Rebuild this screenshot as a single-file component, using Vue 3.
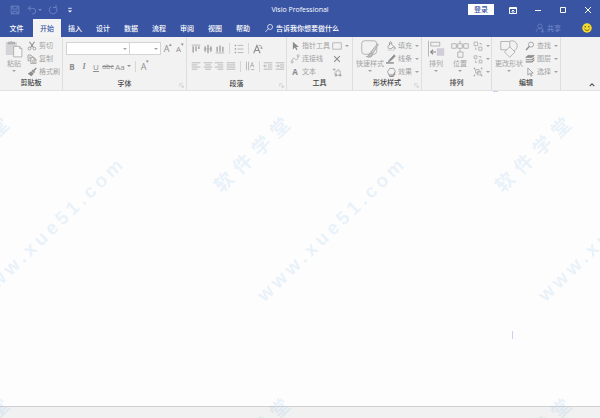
<script setup>
import { ref } from 'vue'

const icons = {
  save: '<path d="M2.5 2.5h9v9h-9zM4.5 2.5v3.5h5v-3.5M4.5 11.5v-3h5v3"/>',
  undo: '<path d="M5.5 2L2.5 5l3 3M2.5 5h5.5a3 3 0 0 1 0 6.500h-1"/>',
  redo: '<path d="M10 3.500a4.500 4.500 0 1 1-5-.5M10.500 1v3h-3.500"/>',
  customize: '<path d="M5 5h4"/><path d="M4.500 7.500h5l-2.500 2.500z" fill="currentColor" stroke="none"/>',
  search: '<circle cx="8.500" cy="5.500" r="3.500"/><path d="M6 8l-4 4.500"/>',
  person: '<circle cx="7" cy="4.500" r="3"/><path d="M1.500 13c0-3.500 2.500-5.500 5.500-5.500s4 1 5 2.500M8 11.500h5M10.500 9v5"/>',
  ribbonMode: '<path d="M3.500 4.500h7v6h-7zM3.500 5.500h7M7 10V7M5.500 8.500L7 7l1.500 1.500"/>',
  min: '<path d="M4 7.500h6"/>',
  max: '<path d="M4.500 4.500h5v5h-5z"/>',
  close: '<path d="M4 4l6 6M10 4l-6 6"/>',
  scissors: '<path d="M3.500 1l5.500 8M10.500 1L5 9" stroke-width="1.500"/><circle cx="3.500" cy="10.500" r="2"/><circle cx="10.500" cy="10.500" r="2"/>',
  copy: '<path d="M5 9.500H1.500v-8h4l2 2V5M5.500 4.500h4l3 3v6h-7zM9.500 4.500v3h3M7 9.500h4M7 11.500h4M3 4.500h2M3 6.500h2"/>',
  brush: '<path d="M13 1.500L9.500 5" stroke-width="2"/><path d="M8 3.500l3.500 3.500-2 1.500-3-3zM6 6l3.500 3.500L6 13 1 9.500z" fill="currentColor" stroke="none"/>',
  pointer: '<path d="M4 1v11l3-3 2 4 1.500-1-2-3.500h4z" fill="currentColor" stroke="none"/>',
  connector: '<path d="M3 9.500C3 5 6 5 7 7s4 2 4-3"/><circle cx="3" cy="11" r="1.500"/><circle cx="11.500" cy="2.500" r="1.500"/>',
  rect: '<path d="M1 2.500h12v9H1z"/>',
  cross: '<path d="M3 3l8 8M11 3l-8 8" stroke-width="1.500"/>',
  cpoint: '<path d="M5.500 5.500h6v6h-6zM1 3.500h4M3 1.500v4M8 3.500h2M3.500 8v2"/><path d="M10 10h3v3h-3zM4 10h3v3H4z" fill="currentColor" stroke="none"/>',
  fill: '<path d="M6 3l5 4.500-4 3.500H4L2.500 8zM5 6V2q1.500-2 3 0v2M12 8q2 3 0 3.500-1.500-.5 0-3.500"/><path d="M2 12h10v2H2z" fill="#ddd" stroke="none"/>',
  line: '<path d="M11.500 1L5 8l-2 3 3.500-1.500L13 3z" fill="currentColor"/><path d="M0 12.500h11" stroke-width="2"/>',
  effect: '<path d="M5 2h6l2 4-3 5H5L2 7z"/><path d="M2 8l3 4h5l3-5v3l-3 4H5z" fill="currentColor" stroke="none"/>',
  group: '<path d="M1.500 1.500h5v5h-5zM8 8.500h4.500v4.500H8zM9 3.500h2.500v2M3.500 9v2.500H5"/>',
  order: '<path d="M1.500 2.500h4v4h-4zM8.500 8.500h4v4h-4zM8 3.500h3v2M3.500 9v3h2"/>',
  bundle: '<path d="M3.500 3.500h5v5h-5zM6 6h5v5H6z"/><path d="M1 1h2v2H1zM11 1h2v2h-2zM1 11h2v2H1zM11 11h2v2h-2z" fill="currentColor" stroke="none"/>',
  find: '<circle cx="8.500" cy="5" r="3.500"/><path d="M6 7.500l-4.500 5" stroke-width="2"/>',
  layers: '<path d="M1 8h9l3-3M1 11h9l3-3" stroke-width="1.500"/><path d="M4 2h9l-3 3H1z" fill="currentColor"/>',
  cursor: '<path d="M4 1.500v10l2.500-2.500 2 4 1.500-1-2-3.500h3.500z"/>',
  top: '<path d="M1 1.500h12"/><path d="M3 3v9M7 3v7M11 3v4" stroke-width="2"/>',
  middle: '<path d="M1 7h12" /><path d="M3 3v8M7 1v12M11 3v8" stroke-width="2"/>',
  bottom: '<path d="M1 12.500h12"/><path d="M3 4v7M7 2v9M11 4v7" stroke-width="2"/>',
  bullets: '<path d="M1 2h2M1 7h2M1 12h2" stroke-width="2"/><path d="M5 2h8M5 7h8M5 12h8"/>',
  rotate: '<path d="M1 13L5.500 2 10 13M3 9h5" stroke-width="1.500"/><path d="M8 2q4-1 4 4M10 5l2 2 2-2"/>',
  left: '<path d="M1 2.500h12M1 5.500h8M1 8.500h12M1 11.500h8"/>',
  center: '<path d="M1 2.500h12M3 5.500h8M1 8.500h12M3 11.500h8"/>',
  right: '<path d="M1 2.500h12M5 5.500h8M1 8.500h12M5 11.500h8"/>',
  justify: '<path d="M1 2.500h12M1 5.500h12M1 8.500h12M1 11.500h12"/>',
  vertical: '<path d="M2 1v12M5 1v12M7.500 9L10 2l2.500 7M8.500 6.500h3M8 12h5"/>',
  outdent: '<path d="M1 2.500h12M7 5.500h6M7 8.500h6M1 11.500h12M6 7H1M3 5L1 7l2 2"/>',
  indent: '<path d="M1 2.500h12M7 5.500h6M7 8.500h6M1 11.500h12M1 7h5M4 5l2 2-2 2"/>',
  launcher: '<path d="M2 10V2h8M6 6l6 6M12 7v5H7"/>',
  paste: '<path d="M1 3h15v17H1z" fill="#d6d3d8" stroke="none"/><path d="M4 5V3h3q1.500-3 3 0h3v2z" fill="#bbb"/><path d="M11.500 8.500h8l3 3v11h-11zM19.500 8.500v3h3" fill="#f7f7f7"/>',
  quick: '<rect x="1" y="1" width="20" height="18" rx="4"/><path d="M22 5L13 16l3 2 7-12z" fill="#ccc"/><path d="M13 17q-3 0-3 4-1 1-3 1 7 3 9-3z" fill="#bbb"/>',
  arrange: '<path d="M2 1v21"/><path d="M5 3h12v5H5z"/><path d="M13 11h10v10H13z" fill="#d0ccd8" stroke="none"/><path d="M12 16H5M8 13l-3 3 3 3" stroke="#888" stroke-width="1.500"/>',
  position: '<path d="M1 5h6v6H1zM17 5h6v6h-6zM9 16h7v7H9zM9 5h6v6H9zM7 8h2M15 8h2M12 11v5M12 1v4"/>',
  shapes: '<circle cx="16" cy="8" r="7"/><path d="M1 2h12v11H1z" fill="#f2f2f2"/><path d="M13 9l7 7-7 7-7-7z" fill="#f2f2f2"/>',
  collapse: '<path d="M3 9l4-4 4 4" stroke-width="2"/>',
}

const tabs = ['文件', '开始', '插入', '设计', '数据', '流程', '审阅', '视图', '帮助']
const active = ref('开始')

const clipboard = [['scissors', '剪切'], ['copy', '复制'], ['brush', '格式刷']]
const styling = [['fill', '填充'], ['line', '线条'], ['effect', '效果']]
const editing = [['find', '查找'], ['layers', '图层'], ['cursor', '选择']]
const arranging = [['group', '组合'], ['order', '次序'], ['bundle', '成组']]

const marks = [-26, 255, 536].flatMap((x) => [
  { text: '软件学堂', x, y: 153, kind: 'name' },
  { text: 'www.xue51.com', x: x + 77, y: 229, kind: 'url' },
  { text: '软件学堂', x, y: 434, kind: 'name' },
])
</script>

<template>
  <div class="window">
    <header class="titlebar">
      <div class="quick-access">
        <button class="ico" aria-label="保存"><svg viewBox="0 0 14 14" v-html="icons.save" /></button>
        <button class="ico" aria-label="撤消"><svg viewBox="0 0 14 14" v-html="icons.undo" /><i class="caret" /></button>
        <button class="ico" aria-label="恢复"><svg viewBox="0 0 14 14" v-html="icons.redo" /></button>
        <button class="ico bright" aria-label="自定义"><svg viewBox="0 0 14 14" v-html="icons.customize" /></button>
      </div>
      <h1>Visio Professional</h1>
      <div class="controls">
        <button class="login">登录</button>
        <button v-for="n in ['ribbonMode', 'min', 'max', 'close']" :key="n" class="win" :aria-label="n">
          <svg viewBox="0 0 14 14" v-html="icons[n]" />
        </button>
      </div>
    </header>

    <nav class="tabs">
      <button v-for="t in tabs" :key="t" :class="{ active: t === active }" @click="active = t">{{ t }}</button>
      <button class="tell"><svg viewBox="0 0 14 14" v-html="icons.search" />告诉我你想要做什么</button>
      <button class="share"><svg viewBox="0 0 14 14" v-html="icons.person" />共享</button>
      <button class="smile" aria-label="反馈">
        <svg viewBox="0 0 20 20">
          <circle cx="10" cy="10" r="9.500" fill="#f6dc2c" />
          <circle cx="6.500" cy="7.500" r="1.500" fill="#4c4a35" />
          <circle cx="13.500" cy="7.500" r="1.500" fill="#4c4a35" />
          <path d="M4.500 11.500q5.500 7 11 0" fill="none" stroke="#4c4a35" stroke-width="1.500" />
        </svg>
      </button>
    </nav>

    <div class="ribbon">
      <section class="group">
        <div class="body">
          <button class="large"><svg viewBox="0 0 24 24" v-html="icons.paste" />粘贴<i class="caret" /></button>
          <div class="stack">
            <button v-for="[i, t] in clipboard" :key="t" class="small darkicon"><svg viewBox="0 0 14 14" v-html="icons[i]" />{{ t }}</button>
          </div>
        </div>
        <h2>剪贴板</h2>
      </section>

      <section class="group">
        <div class="body rows">
          <div class="row">
            <div class="combo wide"><select aria-label="字体"><option></option></select><i class="caret" /></div>
            <div class="combo"><select aria-label="字号"><option></option></select><i class="caret" /></div>
            <button class="cell letter big grow">A<sup>▴</sup></button>
            <button class="cell letter">A<sup>▾</sup></button>
          </div>
          <div class="row">
            <button class="cell letter bold">B</button>
            <button class="cell letter italic">I</button>
            <button class="cell letter under">U</button>
            <button class="cell letter strike">abc</button>
            <button class="cell letter case">Aa<i class="caret" /></button>
            <span class="sep" />
            <button class="cell letter big">A<sup>▾</sup></button>
          </div>
        </div>
        <h2>字体</h2>
        <button class="launcher" aria-label="字体设置"><svg viewBox="0 0 14 14" v-html="icons.launcher" /></button>
      </section>

      <section class="group">
        <div class="body rows">
          <div class="row">
            <button v-for="n in ['top', 'middle', 'bottom']" :key="n" class="cell" :aria-label="n"><svg viewBox="0 0 14 14" v-html="icons[n]" /></button>
            <span class="sep" />
            <button class="cell" aria-label="项目符号"><svg viewBox="0 0 14 14" v-html="icons.bullets" /></button>
            <span class="sep" />
            <button class="cell dark" aria-label="旋转文本"><svg viewBox="0 0 14 14" v-html="icons.rotate" /></button>
          </div>
          <div class="row">
            <button v-for="n in ['left', 'center', 'right', 'justify']" :key="n" class="cell" :aria-label="n"><svg viewBox="0 0 14 14" v-html="icons[n]" /></button>
            <span class="sep" />
            <button class="cell" aria-label="文字方向"><svg viewBox="0 0 14 14" v-html="icons.vertical" /></button>
            <span class="sep" />
            <button v-for="n in ['outdent', 'indent']" :key="n" class="cell" :aria-label="n"><svg viewBox="0 0 14 14" v-html="icons[n]" /></button>
          </div>
        </div>
        <h2>段落</h2>
        <button class="launcher" aria-label="段落设置"><svg viewBox="0 0 14 14" v-html="icons.launcher" /></button>
      </section>

      <section class="group">
        <div class="body">
          <div class="stack">
            <button class="small darkicon"><svg viewBox="0 0 14 14" v-html="icons.pointer" />指针工具</button>
            <button class="small"><svg viewBox="0 0 14 14" v-html="icons.connector" />连接线</button>
            <button class="small"><b>A</b>文本</button>
          </div>
          <div class="stack">
            <button class="small" aria-label="矩形"><svg viewBox="0 0 14 14" v-html="icons.rect" /><i class="caret" /></button>
            <button class="small darkicon" aria-label="连接点"><svg viewBox="0 0 14 14" v-html="icons.cross" /></button>
            <button class="small" aria-label="文本块"><svg viewBox="0 0 14 14" v-html="icons.cpoint" /></button>
          </div>
        </div>
        <h2>工具</h2>
      </section>

      <section class="group">
        <div class="body">
          <button class="large wide"><svg viewBox="0 0 24 24" v-html="icons.quick" />快速样式<i class="caret" /></button>
          <div class="stack">
            <button v-for="[i, t] in styling" :key="t" class="small darkicon"><svg viewBox="0 0 14 14" v-html="icons[i]" />{{ t }}<i class="caret" /></button>
          </div>
        </div>
        <h2>形状样式</h2>
        <button class="launcher" aria-label="形状样式设置"><svg viewBox="0 0 14 14" v-html="icons.launcher" /></button>
      </section>

      <section class="group">
        <div class="body">
          <button class="large"><svg viewBox="0 0 24 24" v-html="icons.arrange" />排列<i class="caret" /></button>
          <button class="large"><svg viewBox="0 0 24 24" v-html="icons.position" />位置<i class="caret" /></button>
          <div class="stack">
            <button v-for="[i, t] in arranging" :key="t" class="small" :aria-label="t"><svg viewBox="0 0 14 14" v-html="icons[i]" /><i class="caret" /></button>
          </div>
        </div>
        <h2>排列</h2>
      </section>

      <section class="group">
        <div class="body">
          <button class="large wide"><svg viewBox="0 0 24 24" v-html="icons.shapes" />更改形状<i class="caret" /></button>
          <div class="stack">
            <button v-for="[i, t] in editing" :key="t" class="small darkicon"><svg viewBox="0 0 14 14" v-html="icons[i]" />{{ t }}<i class="caret" /></button>
          </div>
        </div>
        <h2>编辑</h2>
      </section>

      <button class="collapse" aria-label="折叠功能区"><svg viewBox="0 0 14 14" v-html="icons.collapse" /></button>
    </div>

    <main class="canvas" />
    <footer class="status" />

    <div class="watermarks">
      <span v-for="(m, i) in marks" :key="i" :class="['mark', m.kind]" :style="{ left: m.x + 'px', top: m.y + 'px' }">{{ m.text }}</span>
      <i class="trace pen" />
      <i class="trace dash" />
    </div>
  </div>
</template>

<style>
body { margin: 0; }
</style>

<style scoped>
.window {
  position: relative;
  display: flex;
  flex-direction: column;
  min-height: 100vh;
  overflow: hidden;
  background: #fdfdfd;
  font: 7px/9px "Open Sans", "Noto Sans CJK SC", sans-serif;
  color: #a3a3a3;
}
button {
  display: flex;
  align-items: center;
  justify-content: center;
  margin: 0;
  padding: 0;
  border: 0;
  background: none;
  font: inherit;
  color: inherit;
  white-space: nowrap;
}
svg {
  flex: none;
  width: 10px;
  height: 10px;
  fill: none;
  stroke: currentColor;
}
.caret {
  flex: none;
  width: 0;
  height: 0;
  border: 2px solid transparent;
  border-top-color: currentColor;
  border-bottom: 0;
}

.titlebar {
  display: grid;
  grid-template-columns: 1fr auto 1fr;
  align-items: center;
  height: 19px;
  background: #3854a3;
  color: #fff;
}
.quick-access {
  display: flex;
  gap: 5px;
  padding-left: 9px;
  color: #7289c8;
}
.quick-access svg { width: 12px; height: 12px; }
.quick-access .bright { color: #fff; }
h1 {
  margin: 0;
  font: inherit;
}
.controls {
  display: flex;
  align-items: center;
  justify-content: flex-end;
}
.login {
  width: 26px;
  height: 11px;
  margin-right: 6px;
  background: #fff;
  color: #3854a3;
  font-weight: 500;
}
.win { width: 25px; height: 19px; }
.win svg { width: 14px; height: 14px; }

.tabs {
  display: flex;
  height: 18px;
  background: #3854a3;
  color: #fff;
}
.tabs button { width: 28px; font-weight: 500; }
.tabs button:first-child { width: 33px; }
.tabs .active { background: #f4f4f4; color: #3854a3; }
.tabs .tell { width: auto; gap: 2px; margin-left: 7px; }
.tabs .share { width: auto; gap: 2px; margin-left: auto; color: #6e86c6; }
.tabs .smile { width: 10px; margin: 0 8px 0 21px; }
.smile svg { stroke: none; }

.ribbon {
  display: grid;
  grid-template-columns: 63px 124px 100px 66px 69px 70px 69px 1fr;
  background: #f2f2f2;
  border-bottom: 1px solid #e2e2e2;
}
.group {
  position: relative;
  display: flex;
  flex-direction: column;
  padding-top: 2px;
  border-right: 1px solid #dedede;
}
.body {
  display: flex;
  gap: 2px;
  height: 39px;
  padding-left: 3px;
}
h2 {
  margin: 0;
  padding-bottom: 2px;
  font-size: 7px;
  line-height: 9px;
  font-weight: 500;
  text-align: center;
  color: #444;
}
.large {
  flex-direction: column;
  justify-content: flex-start;
  width: 22px;
  padding-top: 1px;
}
.large.wide { width: 28px; }
.large svg { width: 18px; height: 18px; margin-bottom: 1px; }
.large .caret { margin-top: 2px; }
.stack { display: flex; flex-direction: column; }
.small {
  justify-content: flex-start;
  gap: 2px;
  height: 13px;
}
.small .caret { margin-left: 1px; }
.small b { width: 10px; font-size: 8px; text-align: center; color: #8a8a8a; }
.darkicon svg, .dark { color: #8c8c8c; }

.rows { flex-direction: column; gap: 0; padding-top: 1px; }
.row { display: flex; align-items: center; height: 17px; }
.row + .row { height: 18px; }
.combo {
  display: flex;
  align-items: center;
  width: 28px;
  height: 11px;
  padding-right: 2px;
  margin-left: -1px;
  border: 1px solid #d4d4d4;
  background: #fff;
}
.combo.wide { width: 60px; margin-left: 0; }
.combo select {
  flex: 1;
  min-width: 0;
  height: 10px;
  padding: 0;
  border: 0;
  background: none;
  appearance: none;
  font: inherit;
}
.cell { width: 12px; height: 14px; }
.cell svg { width: 10px; height: 10px; }
.letter { color: #8e8e8e; font-size: 8px; }
.letter sup { font-size: 5px; line-height: 5px; align-self: flex-start; }
.big { font-size: 9px; }
.grow { margin-left: 1px; }
.bold { font-weight: 700; }
.italic { font-family: "Liberation Serif", serif; font-style: italic; font-weight: 700; }
.under { text-decoration: underline; }
.strike { font-size: 7px; text-decoration: line-through; }
.case { width: 18px; gap: 2px; }
.sep { width: 1px; height: 11px; margin: 0 3px; background: #d6d6d6; }
.launcher { position: absolute; right: 2px; bottom: 2px; }
.launcher svg { width: 5px; height: 5px; }
.collapse { align-self: end; justify-self: end; margin-right: 4px; color: #555; }
.collapse svg { width: 8px; height: 10px; }

.canvas { flex: 1; }
.status {
  height: 11px;
  border-top: 1px solid #cfd0d2;
  background: #f1f1f1;
}

.watermarks {
  position: absolute;
  inset: 0;
  overflow: hidden;
  pointer-events: none;
}
.mark {
  position: absolute;
  transform: translate(-50%, -50%) rotate(-44deg);
  white-space: nowrap;
  color: rgba(150, 195, 235, 0.2);
  font: 700 19px/24px "Liberation Sans", "Noto Sans CJK SC", sans-serif;
  letter-spacing: 4px;
}
.mark.name { letter-spacing: 7px; }
.trace { position: absolute; background: #d3cdf0; }
.pen { left: 512px; top: 331px; width: 1px; height: 8px; }
.dash { left: 493px; top: 91px; width: 5px; height: 1px; }
</style>
